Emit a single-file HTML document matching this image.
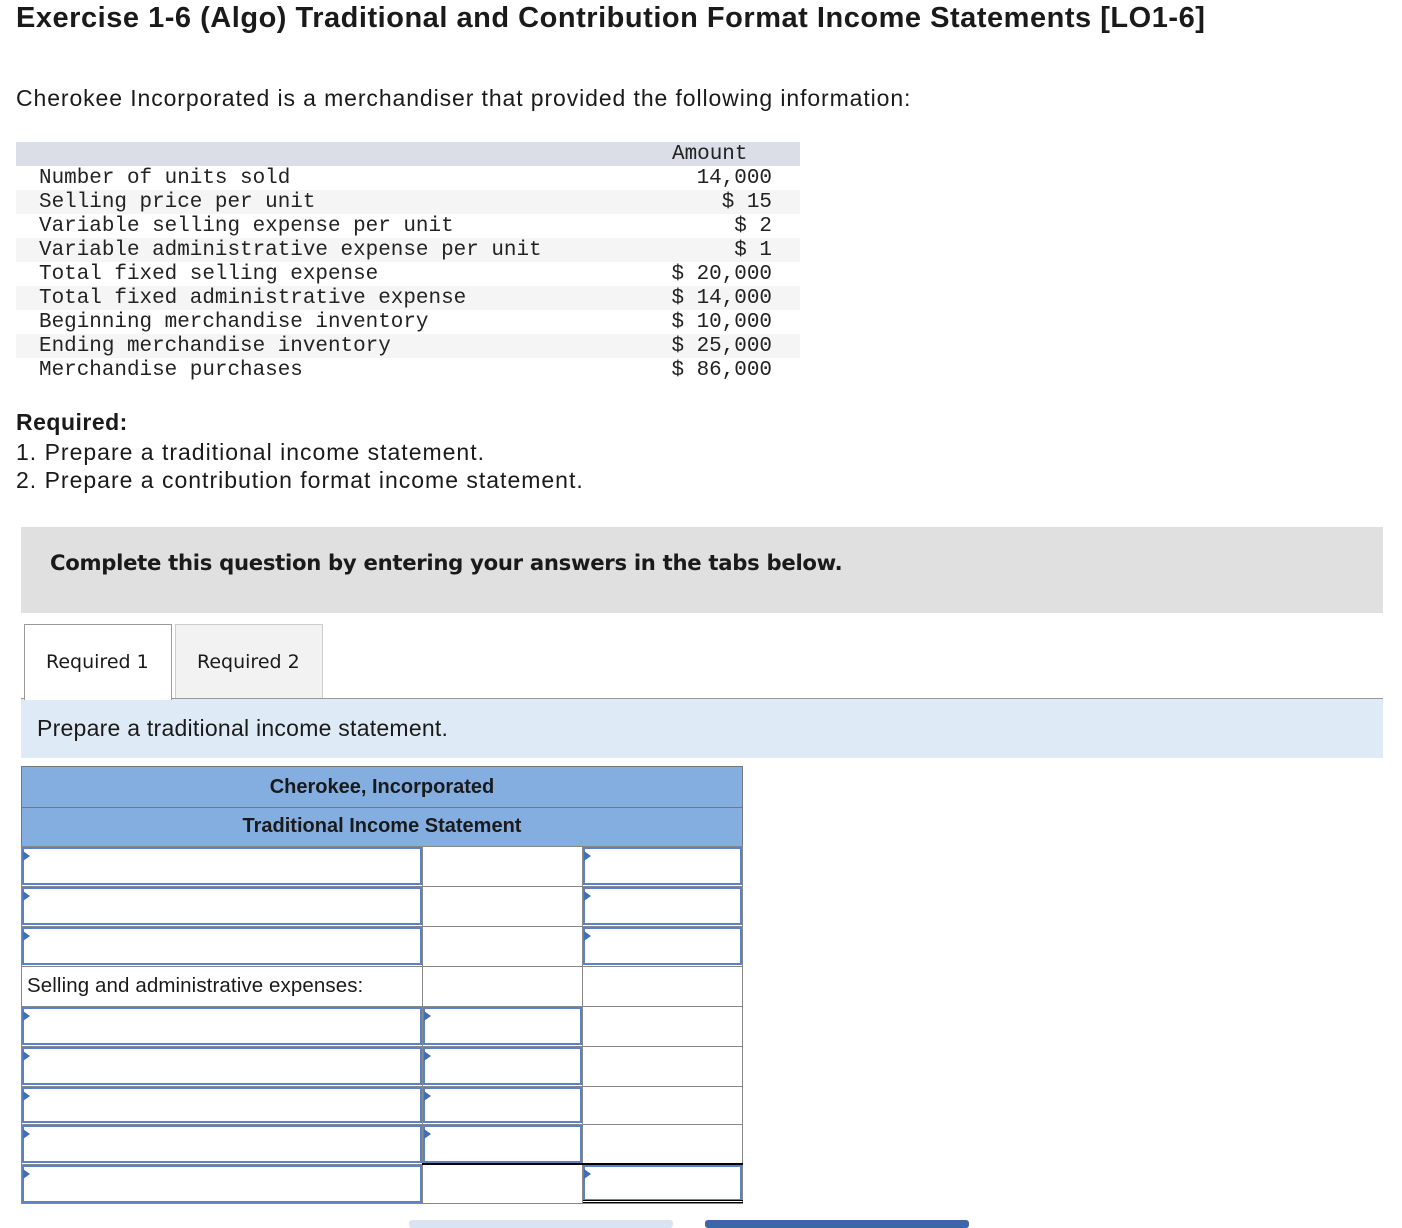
<!DOCTYPE html>
<html><head><meta charset="utf-8"><style>
body{margin:0;width:1402px;height:1224px;overflow:hidden;background:#fff;font-family:"Liberation Sans",sans-serif;color:#1a1a1a;position:relative}
.a{position:absolute;white-space:nowrap}
.m{font-family:"Liberation Mono","DejaVu Sans Mono",monospace;font-size:20.95px;line-height:24px;color:#222}
.c{position:absolute;border:1px solid #888;box-sizing:border-box;background:#fff}
.i{position:absolute;border:2px solid #5b82c4;box-sizing:border-box;background:#fff}
.i:before{content:"";position:absolute;left:-1px;top:2px;border-left:7px solid #3f6fb8;border-top:5px solid transparent;border-bottom:5px solid transparent}
</style></head><body>
<div class="a" style="left:16px;top:2px;font-size:29px;font-weight:bold;letter-spacing:0.52px">Exercise 1-6 (Algo) Traditional and Contribution Format Income Statements [LO1-6]</div>
<div class="a" style="left:16px;top:85px;font-size:23px;letter-spacing:0.9px">Cherokee Incorporated is a merchandiser that provided the following information:</div>

<div class="a" style="left:16px;top:142px;width:784px;height:24px;background:#dcdee7"></div>
<div class="a" style="left:16px;top:190px;width:784px;height:24px;background:#f5f5f5"></div>
<div class="a" style="left:16px;top:238px;width:784px;height:24px;background:#f5f5f5"></div>
<div class="a" style="left:16px;top:286px;width:784px;height:24px;background:#f5f5f5"></div>
<div class="a" style="left:16px;top:334px;width:784px;height:24px;background:#f5f5f5"></div>
<div class="a m" style="left:672px;top:143px">Amount</div>
<div class="a m" style="left:39px;top:167px">Number of units sold<br>Selling price per unit<br>Variable selling expense per unit<br>Variable administrative expense per unit<br>Total fixed selling expense<br>Total fixed administrative expense<br>Beginning merchandise inventory<br>Ending merchandise inventory<br>Merchandise purchases</div>
<div class="a m" style="right:630px;top:167px;text-align:right">14,000<br>$ 15<br>$ 2<br>$ 1<br>$ 20,000<br>$ 14,000<br>$ 10,000<br>$ 25,000<br>$ 86,000</div>

<div class="a" style="left:16px;top:409px;font-size:23px;font-weight:bold;letter-spacing:0.5px">Required:</div>
<div class="a" style="left:16px;top:438px;font-size:23px;line-height:28px;letter-spacing:1px">1. Prepare a traditional income statement.<br>2. Prepare a contribution format income statement.</div>

<div class="a" style="left:21px;top:527px;width:1362px;height:86px;background:#e0e0e0"></div>
<div class="a" style="left:50px;top:550px;font-size:21.2px;font-weight:bold;font-family:'DejaVu Sans',sans-serif;letter-spacing:-0.3px">Complete this question by entering your answers in the tabs below.</div>

<div class="a" style="left:21px;top:698px;width:1362px;height:59px;background:#deebf7;border-top:1px solid #999"></div>
<div class="a" style="left:24px;top:624px;width:148px;height:76px;background:#fff;border:1px solid #999;border-bottom:none;box-sizing:border-box"></div>
<div class="a" style="left:175px;top:624px;width:148px;height:74px;background:#f2f2f2;border:1px solid #ccc;border-bottom:none;box-sizing:border-box"></div>
<div class="a" style="left:46px;top:651px;font-size:19px;font-family:'DejaVu Sans',sans-serif">Required 1</div>
<div class="a" style="left:197px;top:651px;font-size:19px;font-family:'DejaVu Sans',sans-serif">Required 2</div>
<div class="a" style="left:37px;top:715px;font-size:23px;letter-spacing:0.25px">Prepare a traditional income statement.</div>

<div class="a" style="left:21px;top:766px;width:722px;height:81px;background:#84aee0;border:1px solid #777;box-sizing:border-box"></div>
<div class="a" style="left:21px;top:807px;width:722px;height:1px;background:#777"></div>
<div class="a" style="left:21px;top:776px;width:722px;text-align:center;font-size:20px;font-weight:bold">Cherokee, Incorporated</div>
<div class="a" style="left:21px;top:815px;width:722px;text-align:center;font-size:20px;font-weight:bold">Traditional Income Statement</div>

<div class="c" style="left:21px;top:846px;width:402px;height:358px"></div>
<div class="c" style="left:422px;top:846px;width:161px;height:358px"></div>
<div class="c" style="left:582px;top:846px;width:161px;height:358px"></div>
<div class="a" style="left:21px;top:886px;width:722px;height:1px;background:#888"></div>
<div class="a" style="left:21px;top:926px;width:722px;height:1px;background:#888"></div>
<div class="a" style="left:21px;top:966px;width:722px;height:1px;background:#888"></div>
<div class="a" style="left:21px;top:1006px;width:722px;height:1px;background:#888"></div>
<div class="a" style="left:21px;top:1046px;width:722px;height:1px;background:#888"></div>
<div class="a" style="left:21px;top:1086px;width:722px;height:1px;background:#888"></div>
<div class="a" style="left:21px;top:1124px;width:722px;height:1px;background:#888"></div>
<div class="a" style="left:21px;top:1164px;width:722px;height:1px;background:#888"></div>
<div class="a" style="left:27px;top:974px;font-size:20.5px;letter-spacing:0.1px">Selling and administrative expenses:</div>

<div class="i" style="left:22px;top:847px;width:400px;height:38px"></div>
<div class="i" style="left:22px;top:887px;width:400px;height:38px"></div>
<div class="i" style="left:22px;top:927px;width:400px;height:38px"></div>
<div class="i" style="left:22px;top:1007px;width:400px;height:38px"></div>
<div class="i" style="left:22px;top:1047px;width:400px;height:38px"></div>
<div class="i" style="left:22px;top:1087px;width:400px;height:36px"></div>
<div class="i" style="left:22px;top:1125px;width:400px;height:38px"></div>
<div class="i" style="left:22px;top:1165px;width:400px;height:38px"></div>

<div class="i" style="left:423px;top:1007px;width:159px;height:38px"></div>
<div class="i" style="left:423px;top:1047px;width:159px;height:38px"></div>
<div class="i" style="left:423px;top:1087px;width:159px;height:36px"></div>
<div class="i" style="left:423px;top:1125px;width:159px;height:38px"></div>

<div class="i" style="left:583px;top:847px;width:159px;height:38px"></div>
<div class="i" style="left:583px;top:887px;width:159px;height:38px"></div>
<div class="i" style="left:583px;top:927px;width:159px;height:38px"></div>
<div class="i" style="left:583px;top:1165px;width:159px;height:36px"></div>
<div class="a" style="left:422px;top:1163px;width:321px;height:2px;background:#000"></div>
<div class="a" style="left:583px;top:1200px;width:160px;height:1px;background:#000"></div>
<div class="a" style="left:583px;top:1202px;width:160px;height:1px;background:#000"></div>

<div class="a" style="left:409px;top:1220px;width:264px;height:8px;background:#d9e4f0;border-radius:3px"></div>
<div class="a" style="left:705px;top:1220px;width:264px;height:8px;background:#3d65a8;border-radius:3px"></div>
</body></html>
